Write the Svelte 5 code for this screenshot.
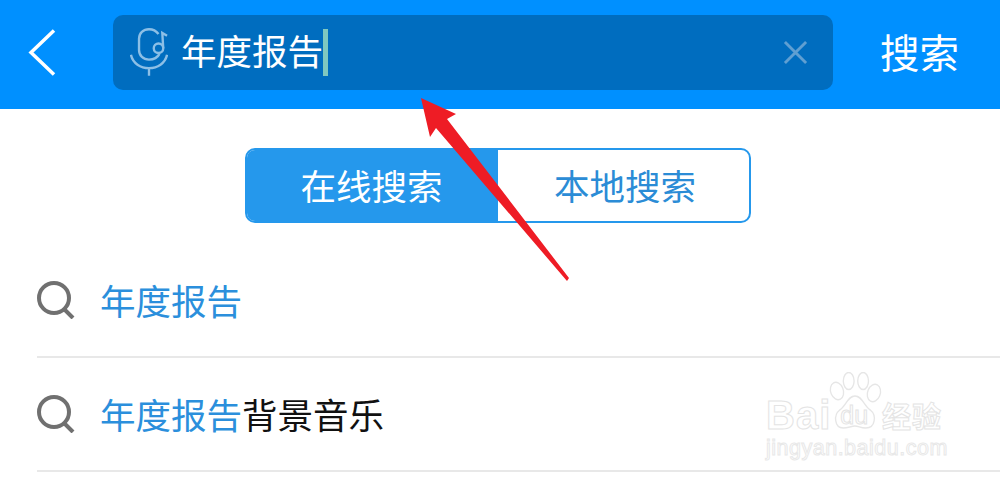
<script lang="ts">
	const query = '年度报告';
	const rows = [
		{ match: query, rest: '' },
		{ match: query, rest: '背景音乐' }
	];
</script>

<div class="page">
	<header class="topbar">
		<svg class="back" viewBox="0 0 30 48" width="30" height="48">
			<path d="M26 1.5 L3 23.5 L26 45.5" />
		</svg>
		<div class="searchbox">
			<svg class="mic" viewBox="0 0 40 50" width="38" height="48">
				<path d="M30 6 C27 2 23 1 20 1 C14 1 9.500 5 9.500 11 V23 C9.500 29 14 33 20 33 C25 33 29 31 31 27" />
				<path d="M1 28 C3 37 11 42 20 42 C29 42 37 37 39 28" />
				<path d="M20 42 V50" />
				<circle cx="30" cy="21" r="5" />
				<path d="M35 21 L34 5 L39 8" />
			</svg>
			<span class="typed">{query}</span>
			<span class="caret"></span>
			<svg class="clear" viewBox="0 0 26 26" width="25" height="25">
				<path d="M2 2 L24 24 M24 2 L2 24" />
			</svg>
		</div>
		<span class="action">搜索</span>
	</header>

	<div class="tabs">
		<span class="tab active">在线搜索</span>
		<span class="tab">本地搜索</span>
	</div>

	<ul class="results">
		{#each rows as row}
			<li class="row">
				<svg class="lens" viewBox="0 0 38 38" width="38" height="38">
					<circle cx="17" cy="17" r="15" />
					<path d="M27 28 L36 37" />
				</svg>
				<span class="label"><span class="match">{row.match}</span>{row.rest}</span>
			</li>
		{/each}
	</ul>

	<!-- red annotation arrow over the page -->
	<svg class="arrow" viewBox="0 0 1000 480" width="1000" height="480">
		<path d="M421 98 L456 114 L447 119 L569 278 L567 281 L436 128 L430 137 Z" />
	</svg>

	<!-- faint watermark -->
	<div class="watermark">
		<svg class="paw" viewBox="0 0 60 58" width="54" height="58" preserveAspectRatio="none">
			<ellipse cx="10" cy="19" rx="7" ry="9" transform="rotate(-25 10 19)" />
			<ellipse cx="23" cy="9" rx="6" ry="8.500" />
			<ellipse cx="39" cy="9" rx="6" ry="8.500" />
			<ellipse cx="51" cy="21" rx="7" ry="9" transform="rotate(25 51 21)" />
			<path d="M30 24 C38 24 40 34 47 38 C54 43 53 56 42 56 C36 56 34 54 30 54 C26 54 22 56 17 56 C7 56 6 43 13 38 C20 34 22 24 30 24 Z" />
		</svg>
		<div class="wm-top">
			<span class="wm-bai">Bai</span>
			<span class="wm-du">du</span>
			<span class="wm-cn">经验</span>
		</div>
		<div class="wm-url">jingyan.baidu.com</div>
	</div>
</div>

<style>
	:global(body) {
		margin: 0;
		background: #fff;
	}

	.page {
		position: relative;
		width: 1000px;
		height: 480px;
		overflow: hidden;
		font-family: "Noto Sans CJK SC", "Noto Sans", sans-serif;
	}

	.topbar {
		display: flex;
		align-items: center;
		height: 109px;
		padding: 0 41px 4px 28px;
		box-sizing: border-box;
		background: #0090ff;
		color: #fff;
	}

	.back {
		flex: none;
		margin-right: 55px;
		margin-top: 1px;
	}

	.back path {
		fill: none;
		stroke: #fff;
		stroke-width: 3.5;
	}

	.searchbox {
		display: flex;
		align-items: center;
		flex: none;
		width: 720px;
		height: 75px;
		padding: 0 25px 0 17px;
		box-sizing: border-box;
		background: #006dbf;
		border-radius: 10px;
	}

	.mic {
		flex: none;
		margin-right: 14px;
		margin-bottom: 1px;
	}

	.mic path, .mic circle {
		fill: none;
		stroke: #8cbfe6;
		stroke-width: 2.5;
	}

	.typed {
		font-size: 35.5px;
		line-height: 50px;
		color: #fff;
		margin-left: -1px;
		margin-bottom: 5px;
	}

	.caret {
		width: 5px;
		height: 47px;
		margin-left: 0;
		margin-bottom: 1px;
		background: #7fc8c0;
	}

	.clear {
		margin-left: auto;
		margin-bottom: 1px;
	}

	.clear path {
		fill: none;
		stroke: #5f9fd2;
		stroke-width: 3;
	}

	.action {
		margin-left: auto;
		font-size: 39.5px;
		line-height: 50px;
		margin-bottom: 3px;
	}

	.tabs {
		display: flex;
		width: 506px;
		height: 75px;
		margin: 39px 0 0 245px;
		box-sizing: border-box;
		border: 2px solid #2598ec;
		border-radius: 10px;
		overflow: hidden;
	}

	.tab {
		flex: 1;
		display: flex;
		align-items: center;
		justify-content: center;
		font-size: 35.5px;
		padding: 0 0 3px 3px;
		color: #2b8cd6;
	}

	.tab.active {
		flex: none;
		width: 251px;
		background: #2598ec;
		color: #fff;
		padding: 0 2px 3px 0;
		box-sizing: border-box;
	}

	.results {
		list-style: none;
		margin: 21px 0 0 37px;
		padding: 0;
	}

	.row {
		display: flex;
		align-items: center;
		height: 114px;
		box-sizing: border-box;
		border-bottom: 2px solid #e8e8e8;
	}

	.lens {
		flex: none;
		margin-right: 25px;
		margin-bottom: 1px;
	}

	.lens circle, .lens path {
		fill: none;
		stroke: #707070;
		stroke-width: 4;
	}

	.label {
		font-size: 35.5px;
		line-height: 50px;
		color: #111;
	}

	.match {
		color: #2b8fdc;
	}

	.arrow {
		position: absolute;
		left: 0;
		top: 0;
	}

	.arrow path {
		fill: #ee1c25;
	}

	.watermark {
		position: absolute;
		left: 766px;
		top: 372px;
		width: 190px;
		height: 90px;
	}

	.paw {
		position: absolute;
		left: 62px;
		top: 0;
	}

	.paw ellipse, .paw path {
		fill: #fff;
		stroke: #e6e6e6;
		stroke-width: 1.5;
	}

	.wm-top {
		position: absolute;
		left: 0;
		top: 20px;
		display: flex;
		align-items: center;
		font-family: "Liberation Sans", sans-serif;
		color: #fff;
		-webkit-text-stroke: 1px #e4e4e4;
	}

	.wm-bai {
		font-size: 40px;
		line-height: 46px;
		font-weight: 700;
		letter-spacing: 1px;
	}

	.wm-du {
		margin-left: 9px;
		font-size: 25px;
		line-height: 30px;
	}

	.wm-cn {
		margin-left: 14px;
		font-family: "Noto Sans CJK SC", sans-serif;
		font-size: 29px;
		line-height: 40px;
		font-weight: 700;
		letter-spacing: 1px;
	}

	.wm-url {
		position: absolute;
		left: 0;
		top: 63px;
		font-family: "Liberation Sans", sans-serif;
		font-size: 21.5px;
		line-height: 26px;
		color: #fff;
		-webkit-text-stroke: 1px #e8e8e8;
		letter-spacing: 0.5px;
	}
</style>
